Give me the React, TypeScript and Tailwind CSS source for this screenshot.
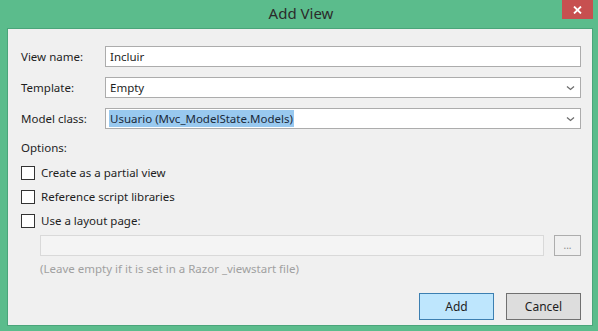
import React from 'react';

const font = { fontFamily: '"Noto Sans", "Open Sans", sans-serif' };

// Small chevron used by the combo boxes
const Chevron: React.FC = () => (
  <svg width="9" height="6" viewBox="0 0 9 6" className="shrink-0">
    <path d="M1 1.5 L4.5 4.5 L8 1.5" fill="none" stroke="#6d6d6d" strokeWidth="1.3" />
  </svg>
);

const FieldRow: React.FC<{ label: string; children: React.ReactNode; className?: string }> = ({
  label,
  children,
  className = '',
}) => (
  <div className={`flex items-center h-[21px] ${className}`}>
    <span className="w-[84px] shrink-0 text-[11.5px] text-[#1e1e1e]">{label}</span>
    <div className="flex-1 h-full">{children}</div>
  </div>
);

const CheckRow: React.FC<{ label: string }> = ({ label }) => (
  <label className="flex items-center h-[24px] gap-[6px]">
    <span className="w-[14px] h-[14px] border border-[#333333] bg-white shrink-0" />
    <span className="text-[11.5px] text-[#1e1e1e]">{label}</span>
  </label>
);

export default function App() {
  return (
    <div className="w-[598px] h-[331px] bg-[#5bbc8c] flex flex-col select-none" style={font}>
      {/* Title bar */}
      <div className="relative h-[28px] flex items-center justify-center">
        <span className="text-[15px] text-[#2b2b2b] pl-[4px] -mt-[1px]">Add View</span>
        <button className="absolute right-[5px] top-0 w-[31px] h-[19px] bg-[#c75050] flex items-center justify-center">
          <svg width="9" height="8" viewBox="0 0 9 8">
            <path d="M1 0.5 L8 7.5 M8 0.5 L1 7.5" stroke="#ffffff" strokeWidth="1.8" />
          </svg>
        </button>
      </div>

      {/* Client area */}
      <div className="ml-[7px] mr-[5px] h-[298px] border border-[#4aa57a] bg-[#f0f0f0] pl-[13px] pr-[11px] pt-[17px] flex flex-col">
        <FieldRow label="View name:">
          <div className="h-full border border-[#acacac] bg-white flex items-center px-[4px] text-[11.5px] text-[#1e1e1e]">
            Incluir
          </div>
        </FieldRow>

        <FieldRow label="Template:" className="mt-[10px]">
          <div className="h-full border border-[#acacac] bg-white flex items-center justify-between pl-[4px] pr-[5px] text-[11.5px] text-[#1e1e1e]">
            <span>Empty</span>
            <Chevron />
          </div>
        </FieldRow>

        <FieldRow label="Model class:" className="mt-[10px]">
          <div className="h-full border border-[#acacac] bg-white flex items-center justify-between pl-[3px] pr-[5px] text-[11.5px]">
            <span className="bg-[#99c9ef] text-[#1a2a3a] px-[1px] leading-[17px]">Usuario (Mvc_ModelState.Models)</span>
            <Chevron />
          </div>
        </FieldRow>

        <div className="h-[21px] mt-[8px] flex items-center text-[11.5px] text-[#1e1e1e]">Options:</div>

        <div className="mt-[3px] flex flex-col">
          <CheckRow label="Create as a partial view" />
          <CheckRow label="Reference script libraries" />
          <CheckRow label="Use a layout page:" />
        </div>

        <div className="mt-[2px] pl-[19px] flex items-center gap-[10px] h-[21px]">
          <div className="flex-1 h-full border border-[#d9d9d9] bg-[#f4f4f4]" />
          <div className="w-[27px] h-full border border-[#adadad] bg-[#f0f0f0] flex items-center justify-center text-[10px] text-[#8a8a8a] leading-none pb-[2px]">
            ...
          </div>
        </div>

        <div className="pl-[19px] mt-[5px] h-[16px] flex items-center text-[11.5px] text-[#a0a0a0]">
          (Leave empty if it is set in a Razor _viewstart file)
        </div>

        <div className="mt-[16px] flex justify-end gap-[12px]">
          <button className="w-[75px] h-[27px] border border-[#3c7fb1] bg-[#bee6fd] text-[12px] text-[#1e1e1e]">
            Add
          </button>
          <button className="w-[75px] h-[27px] border border-[#707070] bg-[#dddddd] text-[12px] text-[#1e1e1e]">
            Cancel
          </button>
        </div>
      </div>
    </div>
  );
}
